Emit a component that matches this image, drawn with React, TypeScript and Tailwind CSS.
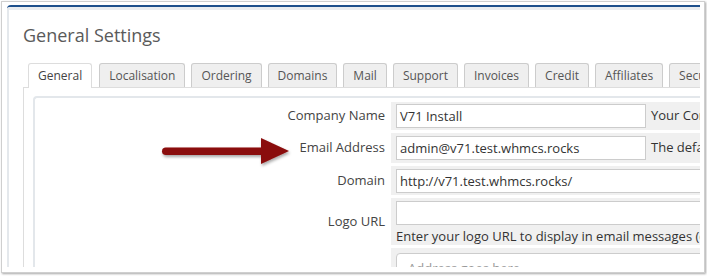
import React from "react";

const tabs = [
  "General",
  "Localisation",
  "Ordering",
  "Domains",
  "Mail",
  "Support",
  "Invoices",
  "Credit",
  "Affiliates",
  "Security",
];

const Arrow = () => (
  <svg
    className="absolute left-[150px] top-[128px]"
    width="150"
    height="45"
    viewBox="150 128 150 45"
  >
    <defs>
      <filter id="arrowShadow" x="-10%" y="-30%" width="130%" height="180%">
        <feDropShadow dx="1" dy="2" stdDeviation="1.5" floodColor="#000" floodOpacity="0.35" />
      </filter>
    </defs>
    <g filter="url(#arrowShadow)" fill="#8a0b0b">
      <rect x="162" y="147.5" width="104" height="7.5" rx="3.75" />
      <polygon points="261,138 289,151 261,164" />
    </g>
  </svg>
);

export default function App() {
  return (
    <div className="relative w-[707px] h-[276px] bg-white overflow-hidden font-['Open_Sans',sans-serif]">
      {/* screenshot frame */}
      <div className="ml-px mt-px w-[704px] h-[272px] border border-[#cfcfcf] shadow-[1px_1px_2px_rgba(0,0,0,0.35)] pl-[5px] pt-[3px]">
        <div className="w-[693px] h-[262px] overflow-hidden bg-white border-t-2 border-[#1d4f8b] rounded-tl-[4px]">
          <div className="h-full border-l-2 border-[#e4e8ec] flex flex-col">
            <div className="h-[3px] bg-[#e9ecef] shrink-0" />

            <h1 className="pl-[14px] pt-[13px] h-[37px] text-[18px] leading-[24px] text-[#5a5a5a] font-normal shrink-0">
              General Settings
            </h1>

            <div className="ml-[14px] mt-[16px] flex flex-col flex-1 min-h-0">
              {/* tabs */}
              <div className="flex gap-[6px] pl-[5px] border-b border-[#dddddd] h-[25px] shrink-0 whitespace-nowrap">
                {tabs.map((t, i) => (
                  <div
                    key={t}
                    className={
                      i === 0
                        ? "h-[25px] px-[9px] mr-px border border-[#dddddd] border-b-0 rounded-t-[3px] bg-white text-[12px] leading-[23px] text-[#444] shrink-0"
                        : "h-[24px] px-[9px] border border-[#cccccc] border-b-0 rounded-t-[3px] bg-[#efefef] text-[12px] leading-[23px] text-[#555] shrink-0"
                    }
                  >
                    {t}
                  </div>
                ))}
              </div>

              {/* tab content */}
              <div className="flex-1 border-l border-[#dddddd] pl-[9px] pt-[8px] min-h-0">
                <div className="w-[700px] h-full border-l-2 border-t-2 border-[#e3e7eb] rounded-tl-[4px] pt-[4px]">
                  <div className="grid grid-cols-[353px_1fr] auto-rows-min gap-[3px] text-[13px] text-[#444]">
                    <div className="h-[28px] flex items-center justify-end pr-[3px]">Company Name</div>
                    <div className="h-[28px] bg-[#f0f0f0] flex items-center pl-[5px] whitespace-nowrap">
                      <div className="w-[250px] h-[24px] border border-[#cccccc] bg-white pl-[3px] leading-[22px] text-[#333]">
                        V71 Install
                      </div>
                      <span className="ml-[5px] text-[#333]">Your Company Name as you want it to appear</span>
                    </div>

                    <div className="h-[30px] flex items-center justify-end pr-[3px]">Email Address</div>
                    <div className="h-[30px] bg-[#f0f0f0] flex items-center pl-[5px] whitespace-nowrap">
                      <div className="w-[250px] h-[24px] border border-[#cccccc] bg-white pl-[3px] leading-[22px] text-[#333]">
                        admin@v71.test.whmcs.rocks
                      </div>
                      <span className="ml-[5px] text-[#333]">The default sender address</span>
                    </div>

                    <div className="h-[29px] flex items-center justify-end pr-[3px]">Domain</div>
                    <div className="h-[29px] bg-[#f0f0f0] flex items-center pl-[5px] whitespace-nowrap">
                      <div className="w-[400px] h-[24px] border border-[#cccccc] bg-white pl-[3px] leading-[22px] text-[#333]">
                        http://v71.test.whmcs.rocks/
                      </div>
                    </div>

                    <div className="h-[47px] flex items-center justify-end pr-[3px]">Logo URL</div>
                    <div className="h-[47px] bg-[#f0f0f0] flex flex-col pl-[5px] pt-[3px] whitespace-nowrap">
                      <div className="w-[400px] h-[24px] border border-[#cccccc] bg-white" />
                      <span className="mt-[3px] leading-[16px] text-[#333]">
                        Enter your logo URL to display in email messages (or leave blank for none)
                      </span>
                    </div>

                    <div className="h-[40px]" />
                    <div className="h-[40px] bg-[#f0f0f0] pl-[5px] pt-[5px]">
                      <div className="w-[400px] h-[40px] border border-[#cccccc] rounded-tl-[4px] bg-white pl-[11px] pt-[6px] text-[#999] leading-[16px]">
                        Address goes here
                      </div>
                    </div>
                  </div>
                </div>
              </div>
            </div>
          </div>
        </div>
      </div>
      <Arrow />
    </div>
  );
}
